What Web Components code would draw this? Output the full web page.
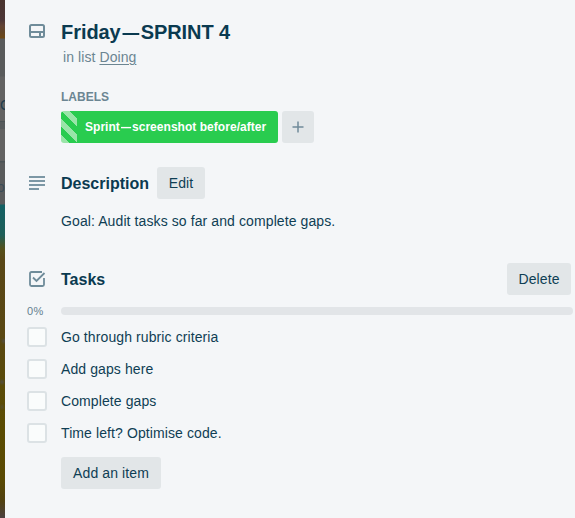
<!DOCTYPE html>
<html lang="en"><head><meta charset="utf-8"><title>Friday—SPRINT 4</title>
<style>html,body{margin:0;height:518px;overflow:hidden;background:#f4f6f8}body{font-family:"Liberation Sans",Arial,sans-serif}</style></head>
<body>
<card-window></card-window>
<script>
const define=(name,html)=>customElements.define(name,class extends HTMLElement{
  constructor(){super();this.attachShadow({mode:'open'}).innerHTML=html;}
});

define('board-edge',`<style>
:host{display:block;position:relative;overflow:hidden;width:5px;height:518px;background:
linear-gradient(#4a342f 0,#4c3637 20px,#624334 26px,#624526 32px,#6e4916 38px,#595b5c 39px,#595b5c 76px,#626262 77px,#626262 121px,#4b5356 121px,#4b5356 122px,#575b5d 122px,#575b5d 129px,#626262 129px,#626262 161px,#4b5356 161px,#4b5356 162px,#595b5c 163px,#595b5c 204px,#136064 205px,#1e5e58 235px,#55501b 249px,#594717 260px,#5a4814 330px,#5a4b0a 380px,#5b4c02 430px,#5a4a04 480px,#514111 501px,#4b4040 518px)}
span{position:absolute;color:#203c4d;font-size:14px;line-height:16px}
.a{left:0;top:97px}.b{left:-3px;top:179px;color:#3a4c57}
i{position:absolute;width:4px;height:4px;border-radius:50%;background:#535047;filter:blur(1px)}
</style><span class="a">C</span><span class="b">o</span><i style="left:2px;top:339px"></i><i style="left:0;top:380px"></i><i style="left:1px;top:405px;width:2px"></i>`);

define('card-icon',`<style>:host{display:block;width:20px;height:20px}::slotted(svg){display:block}</style><slot></slot>`);

define('quiet-button',`<style>
:host{display:flex;align-items:center;justify-content:center;box-sizing:border-box;height:32px;border-radius:3px;background:#e2e6e8;color:#0f3e54;font-size:14px;letter-spacing:.1px;line-height:20px;white-space:nowrap}
</style><slot></slot>`);

define('card-label',`<style>
:host{display:flex;align-items:center;box-sizing:border-box;width:217px;height:32px;padding-left:24px;border-radius:3px;color:#fff;font-weight:700;font-size:12px;letter-spacing:.04px;line-height:20px;white-space:nowrap;
background:repeating-linear-gradient(45deg,#99e5a8 0 5.657px,#29cc4f 5.657px 11.314px) left/16px 32px no-repeat,#29cc4f}
</style><slot></slot>`);

define('card-section',`<style>
:host{display:grid;grid-template-columns:34px 1fr;height:32px;align-items:center;color:#0a3a50}
.h{display:flex;align-items:center;min-width:0}
</style><slot name="icon"></slot><div class="h"><slot></slot></div>`);

define('progress-row',`<style>
:host{display:grid;grid-template-columns:34px 512px;align-items:center;height:16px;font-size:11px;color:#64808f}
.bar{height:8px;border-radius:4px;background:#e2e5e8}span{letter-spacing:.5px}
</style><span><slot></slot></span><div class="bar"></div>`);

define('task-item',`<style>
:host{display:grid;grid-template-columns:34px 1fr;align-items:center;height:32px;font-size:14px;letter-spacing:.1px;line-height:20px;color:#0f3e54}
.box{box-sizing:border-box;width:20px;height:20px;border:2px solid #dce2e5;border-radius:3px;background:#fafcfc}
</style><div class="box"></div><span><slot></slot></span>`);

define('card-window',`<style>
:host{display:grid;grid-template-columns:5px 570px;height:518px}
main{box-sizing:border-box;background:#f4f6f8;padding-left:22px;height:518px;border-top-left-radius:2px}
.title{font-weight:700;font-size:20px;line-height:24px;white-space:nowrap;letter-spacing:-.06px}
.dash{display:inline-block;transform:scaleX(.84)}
.sub{margin-left:36px;height:20px;line-height:20px;font-size:14px;letter-spacing:.08px;color:#6b8592;margin-top:-1px}
.sub u{text-underline-offset:2px;text-decoration-thickness:1px}
.cap{margin:20px 0 0 34px;font-weight:700;font-size:12px;line-height:20px;color:#6b8592}
.labels{display:flex;gap:4px;margin:4px 0 24px 34px}
h3{margin:0 8px 0 0;padding-top:2px;font-size:16px;line-height:20px;white-space:nowrap}
.goal{margin:12px 0 32px 34px;font-size:14px;letter-spacing:.1px;line-height:20px;color:#0f3e54;white-space:nowrap}
</style>
<board-edge></board-edge>
<main>
<card-section style="padding-top:16px"><card-icon slot="icon"><svg width="20" height="20" fill="none" stroke="#6f8c9a" stroke-width="2"><rect x="3" y="3" width="14" height="12" rx="1.5"/><path d="M3 10H17M13 11V14"/></svg></card-icon><div class="title">Friday<span class="dash">—</span>SPRINT 4</div></card-section>
<div class="sub">in list <u>Doing</u></div>
<div class="cap">LABELS</div>
<div class="labels"><card-label><span>Sprint<span class="dash">—</span>screenshot before/after</span></card-label><quiet-button style="width:32px"><svg width="12" height="12" stroke="#708b99" stroke-width="1.5"><path d="M6 .5V11.5M.5 6H11.5"/></svg></quiet-button></div>
<card-section><card-icon slot="icon"><svg width="20" height="20" fill="#7c97a5"><path d="M2 3H18V5H2zM2 7H18V9H2zM2 11H18V13H2zM2 15H12V17H2z"/></svg></card-icon><h3 style="width:88px">Description</h3><quiet-button style="width:48px">Edit</quiet-button></card-section>
<div class="goal">Goal: Audit tasks so far and complete gaps.</div>
<card-section><card-icon slot="icon"><svg width="20" height="20" fill="none" stroke="#6f8c9a" stroke-width="1.8"><path d="M15 3H4.5Q3 3 3 4.500V15.500Q3 17 4.500 17H15.500Q17 17 17 15.500V9" /><path d="M6 8.500L9.500 12L17.500 4"/></svg></card-icon><h3>Tasks</h3><quiet-button style="width:64px;margin:0 4px 0 auto">Delete</quiet-button></card-section>
<progress-row style="margin:8px 0 2px">0%</progress-row>
<task-item>Go through rubric criteria</task-item>
<task-item>Add gaps here</task-item>
<task-item>Complete gaps</task-item>
<task-item>Time left? Optimise code.</task-item>
<quiet-button style="width:100px;margin:8px 0 0 34px">Add an item</quiet-button>
</main>`);
</script></body></html>
